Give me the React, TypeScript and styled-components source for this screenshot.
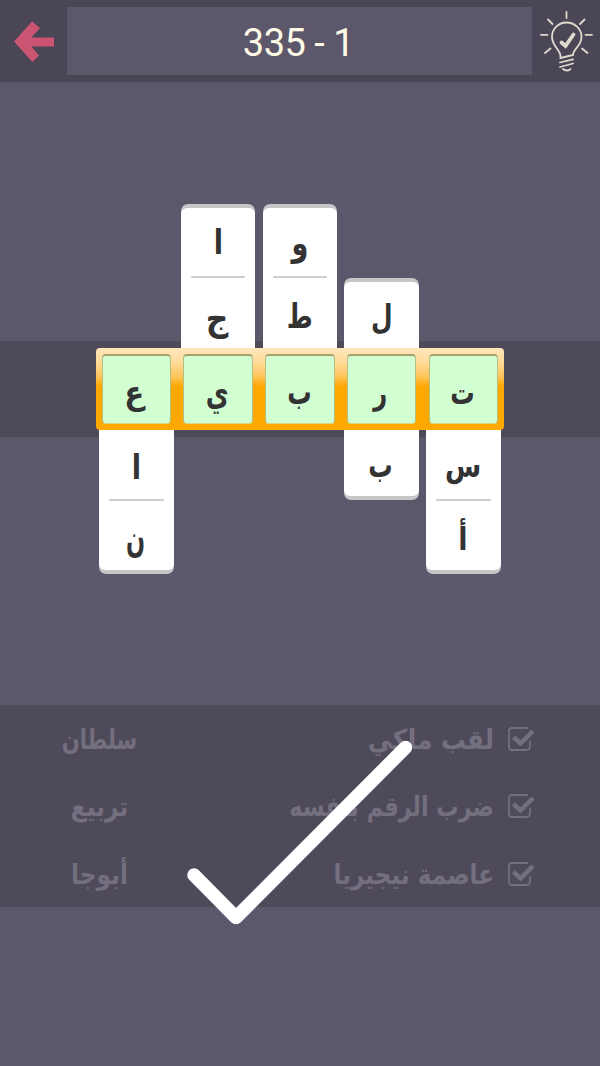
import React from "react";
import styled, { createGlobalStyle } from "styled-components";

const GlobalStyle = createGlobalStyle`
  body { margin: 0; background: #5d576b; }
  * { box-sizing: border-box; }
`;

const Page = styled.div`
  position: relative;
  width: 600px;
  height: 1066px;
  overflow: hidden;
  display: flex;
  flex-direction: column;
  background: #5d576b;
  font-family: "DejaVu Sans", sans-serif;
`;

const Header = styled.header`
  height: 82px;
  flex: none;
  display: grid;
  grid-template-columns: 67px 465px 68px;
  padding: 7px 0;
  background: #4b4656;
`;

const Title = styled.h1`
  margin: 0;
  height: 68px;
  background: #5d576b;
  color: #fffbe6;
  font: 400 38px/73px Roboto, sans-serif;
  letter-spacing: -0.5px;
  text-align: center;
  text-indent: -2px;
`;

const HeaderButton = styled.button`
  border: 0;
  padding: 0;
  background: transparent;
  display: flex;
  svg { display: block; }
`;

const Stage = styled.main`
  height: 623px;
  flex: none;
  padding: 122px 95.5px 0;
  background: linear-gradient(#4f4a5a, #4f4a5a) 0 259px / 100% 96px no-repeat;
`;

const Stacks = styled.div<{ $end?: boolean }>`
  display: grid;
  grid-template-columns: repeat(5, 74.5px);
  column-gap: 7.25px;
  padding: 0 3.5px;
  align-items: ${(p) => (p.$end ? "end" : "start")};
  height: 144px;
`;

const Stack = styled.div<{ $up?: boolean }>`
  background: #c6c6c9;
  overflow: hidden;
  padding: ${(p) => (p.$up ? "4px 0 0" : "0 0 4px")};
  border-radius: ${(p) => (p.$up ? "7px 7px 0 0" : "0 0 7px 7px")};
`;

const StackFace = styled.div<{ $up?: boolean }>`
  display: flex;
  flex-direction: column;
  background: #fff;
  border-radius: ${(p) => (p.$up ? "6px 6px 0 0" : "0 0 6px 6px")};
`;

const Square = styled.div<{ $h: number; $base: number }>`
  height: ${(p) => p.$h}px;
  line-height: ${(p) => p.$base}px;
  text-align: center;
`;

const Rule = styled.div`
  flex: none;
  height: 2px;
  margin: -1px 10px;
  background: #cdcdcd;
  border-radius: 2px;
`;

const Frame = styled.div`
  width: 408.5px;
  height: 82px;
  display: grid;
  grid-template-columns: repeat(5, 69.5px);
  column-gap: 12.25px;
  padding: 6px 6px;
  border-radius: 4px;
  background: linear-gradient(#ffe7bd 0, #ffdb9c 16%, #ffc65f 34%, #ffa800 47%, #ffa800 100%);
`;

const Answer = styled.div`
  height: 70px;
  line-height: 75px;
  text-align: center;
  background: #d2ffd1;
  border: 1px solid #b5bf82;
  border-top: 2px solid #a5a06d;
  border-bottom-color: #d5d88c;
  border-radius: 4px;
`;

const Glyph = styled.span<{ $x: number; $y: number; $sx: number; $sy: number }>`
  display: inline-block;
  font-size: 32px;
  font-weight: 700;
  color: #333;
  transform: translate(${(p) => p.$x}px, ${(p) => p.$y}px) scale(${(p) => p.$sx}, ${(p) => p.$sy});
`;

/* Horizontal shift, vertical shift, horizontal scale, vertical scale */
type Fit = [number, number, number, number];
const fits: Record<string, Fit> = {
  "ا": [0, 1, 0.85, 1.06],
  "ج": [-0.5, 4, 0.98, 1.1],
  "و": [0, 1.5, 0.85, 1.12],
  "ط": [0, 2.5, 0.78, 1.06],
  "ل": [0, 2, 0.78, 1.04],
  "ع": [-1.5, 0, 0.92, 1.02],
  "ي": [-0.5, 0, 0.78, 1.12],
  "ب": [-0.5, -0.5, 0.76, 1.08],
  "ر": [-1, -0.5, 0.76, 1.04],
  "ت": [-0.5, -0.5, 0.76, 1.04],
  "س": [0, 0, 0.82, 1],
  "أ": [-0.5, 2.5, 0.85, 1],
  "ن": [-1, 3, 0.7, 1.18],
};

const Letter = ({ ch }: { ch: string }) => {
  const [x, y, sx, sy] = fits[ch];
  return <Glyph $x={x} $y={y} $sx={sx} $sy={sy}>{ch}</Glyph>;
};

const Clues = styled.section`
  height: 202px;
  flex: none;
  display: grid;
  grid-template-rows: repeat(3, 67.5px);
  background: #4f4a5a;
  color: #746f7f;
`;

const Clue = styled.div`
  display: grid;
  grid-template-columns: 199px 295px 106px;
  align-items: center;
  svg { display: block; margin-left: 13px; }
`;

const Text = styled.div<{ $center?: boolean; $sx: number }>`
  direction: rtl;
  white-space: nowrap;
  font-size: 25px;
  font-weight: 700;
  line-height: 40px;
  text-align: ${(p) => (p.$center ? "center" : "right")};
  transform-origin: ${(p) => (p.$center ? "center" : "right")};
  transform: translateY(1px) scale(${(p) => p.$sx}, 1.1);
`;

const BigCheck = styled.svg`
  position: absolute;
  left: 180px;
  top: 735px;
`;

const clues = [
  { q: "لقب ملكي", a: "سلطان", qs: 0.985, as: 0.84 },
  { q: "ضرب الرقم بنفسه", a: "تربيع", qs: 0.89, as: 0.93 },
  { q: "عاصمة نيجيريا", a: "أبوجا", qs: 0.925, as: 0.93 },
];

const above = ["", "اج", "وط", "ل", ""];
const below = ["ان", "", "", "ب", "سأ"];
const answer = ["ع", "ي", "ب", "ر", "ت"];

const Tiles = ({ letters, up }: { letters: string; up?: boolean }) => {
  if (!letters) return <div />;
  const last = letters.length - 1;
  return (
    <Stack $up={up}>
      <StackFace $up={up}>
        {[...letters].map((ch, i) => (
          <React.Fragment key={i}>
            {i > 0 && <Rule />}
            {up ? (
              <Square $h={i === last ? (last ? 71 : 66.5) : 69} $base={i === 0 ? 66 : 74}>
                <Letter ch={ch} />
              </Square>
            ) : (
              <Square $h={i === 0 ? (last ? 70 : 66) : 70} $base={72}>
                <Letter ch={ch} />
              </Square>
            )}
          </React.Fragment>
        ))}
      </StackFace>
    </Stack>
  );
};

export default function App() {
  return (
    <Page>
      <GlobalStyle />
      <Header>
        <HeaderButton aria-label="back">
          <svg width="67" height="68" viewBox="0 7 67 68">
            <path d="M14 41.5 32 21.5 40 28 31.5 37.5H54V46.5H31.5L39 55.5 32.5 62Z" fill="#cb5472" />
          </svg>
        </HeaderButton>
        <Title>335 - 1</Title>
        <HeaderButton aria-label="hint">
          <svg width="68" height="68" viewBox="532 7 68 68" fill="none" stroke="#dedace" strokeWidth="1.8" strokeLinecap="round">
            <path d="M560.5 56C560.5 50 552 46 552 37C552 28.500 558.5 22.500 566.500 22.500S581.500 28.500 581.500 37C581.500 46 573 49 573 55L560.500 58Z" />
            <path d="M560 62.500 573 59.300M560 67 573 63.500M563 69C565 71 569 71 570.500 69" />
            <path d="M566.500 12V18M548 19.500 552.500 24M584.500 19.500 580 24M541 34.800H547.500M585.500 34.800H592M545 53 550.500 48.500M582 48.500 587.500 53" />
            <path d="M561.500 42.500 565.500 46 573.500 34.500" strokeWidth="3.8" />
          </svg>
        </HeaderButton>
      </Header>
      <Stage>
        <Stacks $end>
          {above.map((l, i) => <Tiles key={i} letters={l} up />)}
        </Stacks>
        <Frame>
          {answer.map((ch) => <Answer key={ch}><Letter ch={ch} /></Answer>)}
        </Frame>
        <Stacks>
          {below.map((l, i) => <Tiles key={i} letters={l} />)}
        </Stacks>
      </Stage>
      <Clues>
        {clues.map((c) => (
          <Clue key={c.q}>
            <Text $center $sx={c.as}>{c.a}</Text>
            <Text $sx={c.qs}>{c.q}</Text>
            <svg width="30" height="26" viewBox="0 0 30 26" fill="none" stroke="#746f7f">
              <path d="M21 2H5Q2 2 2 5V21Q2 24 5 24H19Q23 24 23 20V15" strokeWidth="1.8" />
              <path d="M6.500 11 13.500 17.500 26 5" strokeWidth="4.500" />
            </svg>
          </Clue>
        ))}
      </Clues>
      <BigCheck width="240" height="200" viewBox="180 735 240 200" fill="none" stroke="#fff" strokeWidth="13.500" strokeLinecap="round" strokeLinejoin="round">
        <path d="M194 875 236 917.500 405.500 747.500" />
      </BigCheck>
    </Page>
  );
}
